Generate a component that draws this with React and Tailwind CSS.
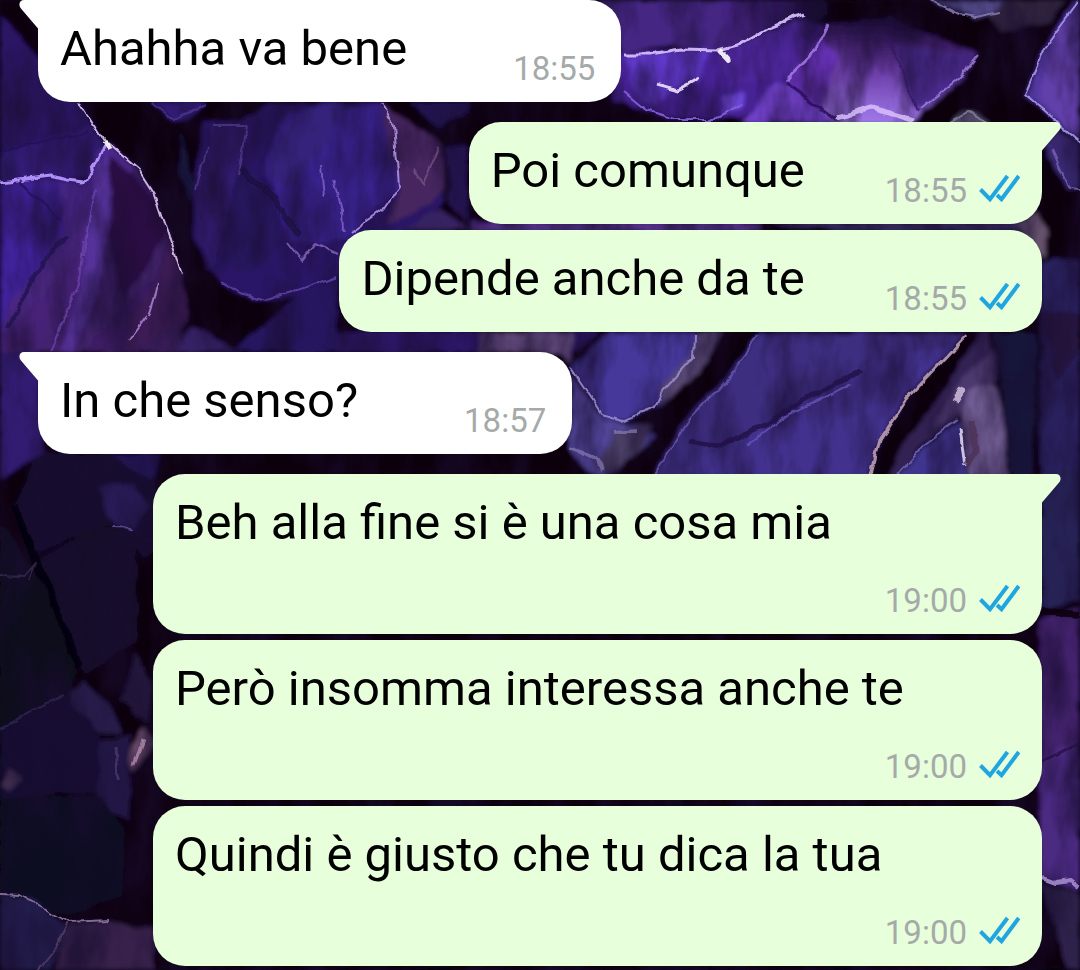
const messages = [
  { id: 1, text: 'Ahahha va bene', time: '18:55', first: true },
  { id: 2, text: 'Poi comunque', time: '18:55', mine: true, first: true },
  { id: 3, text: 'Dipende anche da te', time: '18:55', mine: true },
  { id: 4, text: 'In che senso?', time: '18:57', first: true },
  { id: 5, text: 'Beh alla fine si è una cosa mia', time: '19:00', mine: true, first: true, wide: true },
  { id: 6, text: 'Però insomma interessa anche te', time: '19:00', mine: true, wide: true },
  { id: 7, text: 'Quindi è giusto che tu dica la tua', time: '19:00', mine: true, wide: true },
]

export default function App() {
  return (
    <main className="relative isolate min-h-screen overflow-hidden bg-[#0b0618] font-[Roboto,sans-serif]">
      <Wallpaper />
      <ol className="flex flex-col px-[38px] pb-1">
        {messages.map((m, i) => (
          <Message key={m.id} message={m} spacing={i === 0 ? '' : m.first ? 'mt-5' : 'mt-1.5'} />
        ))}
      </ol>
    </main>
  )
}

function Message({ message, spacing }) {
  const { text, time, mine, first, wide } = message
  const color = mine ? 'bg-[#e7ffdb]' : 'bg-white'
  const corner = first ? (mine ? 'rounded-tr-none' : 'rounded-tl-none') : ''
  const layout = wide
    ? 'w-[889px] max-w-full flex-col'
    : mine
      ? 'items-end justify-between gap-20'
      : 'items-end justify-between gap-[106px]'

  return (
    <li
      className={`relative flex rounded-[32px] pt-5 pb-3.5 pl-[22px] ${mine ? 'self-end pr-[22px]' : 'self-start pr-[26px]'} ${color} ${corner} ${layout} ${spacing}`}
    >
      {first && <Tail mine={mine} />}
      <p className={`text-[49px] leading-[58px] text-black ${wide ? '' : 'mb-2.5'}`}>{text}</p>
      <div className={`flex items-center justify-end gap-3 ${wide ? 'mt-[30px]' : ''}`}>
        <time className="text-[33px] leading-[38px] text-[#a5aaa9]">{time}</time>
        {mine && <ReadTicks />}
      </div>
    </li>
  )
}

function Tail({ mine }) {
  return (
    <svg
      aria-hidden="true"
      viewBox="0 0 20 30"
      className={`absolute top-0 h-[30px] w-5 ${mine ? '-right-[19px] text-[#e7ffdb]' : '-left-[19px] -scale-x-100 text-white'}`}
    >
      <path d="M0 0H15C19 0 21 4 18.500 8L1 28.500V30H0Z" fill="currentColor" />
    </svg>
  )
}

function ReadTicks() {
  return (
    <svg
      role="img"
      aria-label="Read"
      viewBox="0 0 41 28"
      className="mb-1.5 h-7 w-[41px]"
      fill="none"
      stroke="#1fa5e0"
      strokeWidth="4"
    >
      <path d="M1.500 15.500L11 25.200L28.500 2" />
      <path d="M18 21L22.500 25.200L39.800 2" />
    </svg>
  )
}

// Amethyst rocks: dark cracks, faceted stones, then bright chipped edges.
const stones = [
  ['0,14 37,55 82,103 102,140 88,172 78,181 0,181', '#2a1763'],
  ['0,150 95,125 100,142 88,172 60,184 0,181', '#301c76'],
  ['0,181 84,182 96,152 106,142 135,168 154,194 168,235 180,275 188,310 178,352 0,352', 'url(#leftStone)'],
  ['110,155 138,180 160,205 165,235 142,275 122,300 108,240', '#2b1042'],
  ['0,182 60,184 64,230 34,275 10,300 0,345', '#40219b'],
  ['168,235 188,300 186,322 150,340 125,352 128,320 155,285', '#3c1f55'],
  ['96,165 110,155 108,240 95,300 72,352 60,352 80,290', '#54309a'],
  ['150,102 205,102 188,119 174,121', '#38208a'],
  ['180,130 196,190 188,200 180,175', '#16143a'],
  ['203,122 240,122 268,104 380,102 398,125 440,145 445,200 430,215 337,280 300,297 265,302 235,293 207,270 194,235 194,190', '#2c1966'],
  ['212,125 247,125 238,180 225,230 212,272 196,235 197,185', '#321d72'],
  ['285,112 378,104 394,125 398,188 352,236 320,245 290,240 275,195 262,170', '#38248c'],
  ['275,140 310,106 345,102 322,150 285,190 268,170', '#35217a'],
  ['240,165 275,200 285,240 250,275 215,260', '#28165c'],
  ['380,102 442,145 444,192 415,212 385,225 400,188', '#46265f'],
  ['410,102 467,102 467,112 438,128', '#211552'],
  ['446,145 467,145 467,222 450,205', '#271758'],
  ['430,213 441,207 470,230 405,230', '#342060'],
  ['337,262 337,352 232,352', '#28165e'],
  ['190,327 210,334 236,352 175,352', '#352066'],
  ['337,332 600,332 575,352 337,352', '#2b1964'],
  ['480,332 575,332 571,365 560,352 480,352', '#5c4474'],
  ['600,0 825,0 828,16 760,42 718,50 670,45 623,52', 'url(#topStone)'],
  ['615,52 660,52 700,46 720,50 800,20 825,25 785,82 740,118 670,118 615,100', '#472295'],
  ['624,56 660,52 708,48 700,82 670,87 655,108 640,100', '#5e39c8'],
  ['715,54 805,18 815,50 780,80 750,80 730,88', '#4d269a'],
  ['722,96 745,92 742,108 722,116', '#6c47d8'],
  ['785,82 826,24 890,18 978,54 960,82 920,114 912,124 835,124', 'url(#brightStone)'],
  ['895,44 975,54 960,80 920,112 912,106', '#4a2c8c'],
  ['740,122 775,84 788,83 836,122', '#7041c8'],
  ['785,82 820,38 838,55 822,110', '#6730b8'],
  ['928,0 1006,0 1000,12 975,18 958,10', '#4f4684'],
  ['1006,0 1065,0 1050,22 1000,32 990,16', '#302740'],
  ['1080,0 1076,0 1045,45 1024,95 1060,124 1080,142', '#5339a0'],
  ['1055,30 1080,15 1080,140 1040,100', '#6240aa'],
  ['950,124 962,113 978,115 990,124', '#65617a'],
  ['1044,147 1058,130 1080,144 1080,190 1069,192', '#3b2a75'],
  ['470,222 760,222 760,232 470,232', '#56318e'],
  ['760,222 1042,222 1042,232 850,232', '#302559'],
  ['1015,224 1035,212 1048,230 1044,258', '#65516c'],
  ['1042,262 1056,258 1080,260 1080,480 1040,480', '#2b2060'],
  ['1042,312 1080,312 1080,350 1055,385', '#281540'],
  ['571,368 608,333 696,333 696,358 662,405 626,420 606,420', '#44379a'],
  ['696,333 722,333 700,372 660,407 662,385 692,355', '#594873'],
  ['571,376 604,420 640,425 656,437 605,478 585,472 571,447', '#53479b'],
  ['618,430 652,425 640,450 610,474 595,468', '#4c4165'],
  ['758,333 965,333 905,398 880,440 868,478 652,478 686,418 732,372', '#3c2f80'],
  ['800,400 870,362 955,345 905,398 880,440 868,478 660,478 730,445', '#42338d'],
  ['890,478 902,445 940,395 968,350 980,333 990,333 994,378 964,415 920,445 900,478', '#332252'],
  ['962,378 994,350 997,380 970,408 930,430', '#4b386d'],
  ['898,478 925,446 960,422 968,478', '#41358e'],
  ['962,418 970,390 995,384 1004,415 1006,478 970,478', '#705b91'],
  ['994,333 1038,333 1036,390 1030,478 1010,478 1004,400', '#14123a'],
  ['0,352 38,352 42,454 18,470 0,478', '#321b72'],
  ['40,454 155,454 155,545 145,560 120,525 92,530 38,552 14,505', '#16112f'],
  ['100,485 132,482 150,508 132,530 116,528 103,505', '#291d5a'],
  ['110,454 160,454 152,482', '#241657'],
  ['40,560 92,530 136,530 137,640 85,676 65,630', '#190c29'],
  ['0,520 35,570 78,672 65,695 0,730', '#0d0b1d'],
  ['68,692 82,681 112,705 122,735 100,732 75,710', '#251a48'],
  ['0,728 66,695 100,735 98,790 0,800', '#130e32'],
  ['98,742 132,735 130,820 98,805', '#241744'],
  ['130,755 142,728 153,744 134,772', '#735272'],
  ['0,785 10,769 23,780 8,792', '#443052'],
  ['0,800 98,795 125,830 122,895 65,915 0,892', '#0e0a20'],
  ['0,894 35,900 68,928 50,970 0,970', '#211d4c'],
  ['68,925 110,920 153,930 153,970 55,970', '#38214b'],
  ['136,650 153,690 148,724 120,700', '#20133a'],
  ['1040,470 1080,470 1080,600 1042,610', '#272054'],
  ['1040,620 1080,606 1080,750 1040,766', '#43246c'],
  ['1040,766 1060,746 1080,744 1080,892 1040,876', '#4b2b82'],
  ['1040,882 1080,894 1080,970 1068,970', '#2d204c'],
]

// [path, colour, width, opacity]
const edges = [
  ['M80 102L104 140L138 169L154 194L167 232L181 276', '#ddc4ee', 2, 0.9],
  ['M0 182L52 176L66 180L84 182L96 164L104 144', '#b596ff', 3, 0.95],
  ['M104 140L109 150', '#ffffff', 5, 0.9],
  ['M128 340L146 316M158 284L148 316', '#b18edb', 2, 0.8],
  ['M84 240L78 285L50 352M95 190L84 255', '#7950bd', 2, 0.6],
  ['M65 235L34 276L8 330', '#1b0d49', 4, 0.7],
  ['M20 180L60 220M0 150L90 132', '#211158', 2, 0.8],
  ['M382 103L394 124L399 186L382 211L350 234', '#ad91e3', 2, 0.9],
  ['M334 180L342 210L343 232M322 165L325 198', '#8563c9', 2, 0.8],
  ['M213 126L246 126L238 176M196 190L206 148', '#5b4298', 2, 0.6],
  ['M240 170L277 202L300 236', '#170b3b', 5, 0.7],
  ['M222 282L240 293L265 301L300 290L337 276', '#6349ac', 2, 0.8],
  ['M415 170L424 186L440 148', '#8e6895', 2, 0.5],
  ['M288 242L302 260L315 244L337 254', '#9575c9', 2, 0.7],
  ['M150 103L174 120L205 104', '#594099', 2, 0.6],
  ['M624 54L650 54L682 49L718 50L740 44L768 28L805 14', '#d9c4ff', 3, 0.9],
  ['M720 50L729 60', '#ffffff', 5, 0.9],
  ['M656 83L678 89L698 78', '#efe3ff', 3, 0.9],
  ['M624 92L646 110L675 119L715 119L742 105', '#8560dc', 2, 0.9],
  ['M829 24L816 50L785 80', '#ab7ef1', 3, 0.8],
  ['M785 82L838 121', '#2b105e', 3, 0.9],
  ['M888 38L902 72L918 112', '#341765', 2, 0.9],
  ['M978 56L960 78L920 110', '#9d86dc', 2, 0.8],
  ['M836 118L870 108L915 120', '#dec7ff', 5, 0.8],
  ['M930 0L958 14L975 17L1000 12', '#8377aa', 2, 0.9],
  ['M1078 2L1044 48L1024 94L1080 142', '#a597ec', 2, 0.9],
  ['M1052 150L1070 190L1080 191', '#7866b4', 2, 0.8],
  ['M950 122L968 113L988 123', '#918da6', 2, 0.7],
  ['M695 335L694 357L664 390L656 408L622 421L603 415L571 368', '#9988ca', 2, 0.9],
  ['M756 335L735 372L690 418L652 478', '#6959af', 2, 0.8],
  ['M862 370L800 402L766 425L720 447L690 442', '#201445', 5, 0.8],
  ['M850 385L790 413L750 443', '#6d5cc0', 2, 0.7],
  ['M966 336L906 400L880 440L870 478', '#bb9fae', 3, 0.9],
  ['M956 402L962 388', '#d9c5e1', 7, 0.8],
  ['M960 428L965 466', '#ded2f1', 3, 0.9],
  ['M972 420L975 450L966 465', '#4b2c52', 7, 0.7],
  ['M898 475L925 444L958 420', '#7669b8', 2, 0.8],
  ['M571 447L597 457L604 472M616 432L638 430', '#9287bb', 4, 0.6],
  ['M14 505L80 668', '#05030d', 7, 0.8],
  ['M0 575L25 576L37 562L30 580', '#352c50', 2, 0.8],
  ['M112 528L132 529', '#66549b', 2, 0.8],
  ['M0 728L65 695', '#302451', 2, 0.8],
  ['M143 740L134 765', '#c299b8', 3, 0.7],
  ['M0 894L20 895L68 922L110 920', '#8d769f', 2, 0.9],
  ['M68 922L55 948L38 970', '#594062', 2, 0.8],
  ['M116 745L118 780', '#58437f', 3, 0.6],
  ['M1042 611L1080 614', '#090610', 8, 0.9],
  ['M1042 762L1080 742', '#241142', 3, 0.8],
  ['M1042 877L1056 882L1070 880L1080 888', '#a28ccb', 4, 0.9],
]

function Wallpaper() {
  return (
    <svg
      aria-hidden="true"
      viewBox="0 0 1080 970"
      preserveAspectRatio="xMidYMid slice"
      className="absolute inset-0 -z-10 h-full w-full"
    >
      <defs>
        <linearGradient id="leftStone" x1="0" y1="0" x2="1" y2="1">
          <stop offset="0" stopColor="#5230b4" />
          <stop offset="0.500" stopColor="#472478" />
          <stop offset="1" stopColor="#341a50" />
        </linearGradient>
        <linearGradient id="topStone" x1="0" y1="0" x2="1" y2="0">
          <stop offset="0" stopColor="#452984" />
          <stop offset="0.600" stopColor="#452481" />
          <stop offset="1" stopColor="#12082a" />
        </linearGradient>
        <linearGradient id="brightStone" x1="0.500" y1="0" x2="0.400" y2="1">
          <stop offset="0" stopColor="#180832" />
          <stop offset="0.450" stopColor="#65379f" />
          <stop offset="1" stopColor="#a17aec" />
        </linearGradient>
        <filter id="rough" x="0" y="0" width="1" height="1">
          <feTurbulence type="fractalNoise" baseFrequency="0.050" numOctaves="3" seed="4" result="noise" />
          <feDisplacementMap in="SourceGraphic" in2="noise" scale="8" xChannelSelector="R" yChannelSelector="G" />
          <feGaussianBlur stdDeviation="2" />
        </filter>
        <filter id="chipped" x="0" y="0" width="1" height="1">
          <feTurbulence type="fractalNoise" baseFrequency="0.050" numOctaves="3" seed="4" result="noise" />
          <feDisplacementMap in="SourceGraphic" in2="noise" scale="8" xChannelSelector="R" yChannelSelector="G" />
          <feGaussianBlur stdDeviation="0.700" />
        </filter>
        <filter id="grain" x="0" y="0" width="1" height="1">
          <feTurbulence type="fractalNoise" baseFrequency="0.030 0.012" numOctaves="4" seed="9" />
          <feColorMatrix values="0 0 0 0 0.010  0 0 0 0 0.004  0 0 0 0 0.030  2.200 0 0 0 -0.800" />
        </filter>
      </defs>
      <rect width="1080" height="970" fill="#080411" />
      <g filter="url(#rough)">
        <rect width="1080" height="970" fill="#080411" />
        {stones.map(([points, fill]) => (
          <polygon key={points} points={points} fill={fill} />
        ))}
      </g>
      <rect width="1080" height="970" filter="url(#grain)" opacity="0.700" />
      <g filter="url(#chipped)" fill="none" strokeLinejoin="round">
        {edges.map(([d, stroke, width, opacity]) => (
          <path key={d} d={d} stroke={stroke} strokeWidth={width} opacity={opacity} />
        ))}
      </g>
    </svg>
  )
}
